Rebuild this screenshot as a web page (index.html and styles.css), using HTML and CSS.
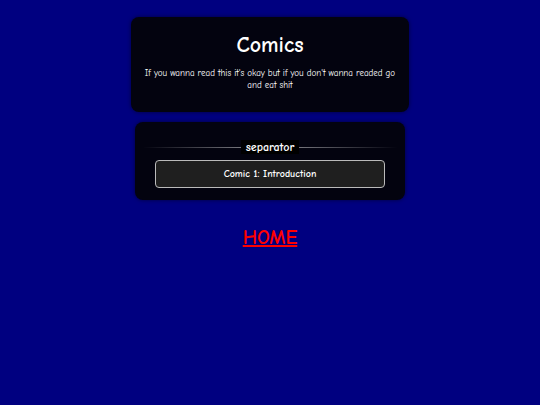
FILE: index.html
```html
<!DOCTYPE html>
<html lang="en">
<head>
    <meta charset="UTF-8">
    <meta name="viewport" content="width=device-width, initial-scale=1.0">
    <title>Comics</title>
    <link rel="stylesheet" href="styles.css">
</head>
<body>
    <div class="header-box">
        <h1>Comics</h1>
        <p>If you wanna read this it's okay but if you don't wanna readed go and eat shit</p>
    </div>
    <div class="list-box">
        <div class="separator"><span>separator</span></div>
        <a class="comic-btn" href="#">Comic 1: Introduction</a>
    </div>
    <a class="home-link" href="#">HOME</a>
</body>
</html>
```

FILE: styles.css
```css
* {
    box-sizing: border-box;
    margin: 0;
    padding: 0;
}
body {
    font-family: 'Comic Sans MS', 'Comic Neue', cursive;
    background: #000080;
    color: #fff;
    min-height: 100vh;
    display: flex;
    flex-direction: column;
    align-items: center;
    padding-top: 17px;
}
.header-box {
    width: 278px;
    height: 95px;
    background: #03030f;
    border-radius: 8px;
    box-shadow: 0 0 4px rgba(0, 0, 0, 0.5);
    text-align: center;
    padding: 16px 12px 0 12px;
}
h1 {
    font-size: 22px;
    font-weight: 900;
    line-height: 24px;
    margin-bottom: 10px;
}
p {
    font-size: 9px;
    line-height: 12px;
}
.list-box {
    width: 270px;
    margin-top: 10px;
    background: #03030f;
    border-radius: 8px;
    box-shadow: 0 0 4px rgba(0, 0, 0, 0.5);
    padding: 18px 20px 12px 20px;
}
.separator {
    display: flex;
    align-items: center;
    margin: 0 -12px 6px -12px;
}
.separator::before, .separator::after {
    content: '';
    flex: 1;
    height: 1px;
}
.separator::before {
    background: linear-gradient(90deg, rgba(255,255,255,0), rgba(255,255,255,0.45));
}
.separator::after {
    background: linear-gradient(90deg, rgba(255,255,255,0.45), rgba(255,255,255,0));
}
.separator span {
    font-size: 12px;
    font-weight: bold;
    background: #000;
    padding: 0 5px;
    line-height: 14px;
}
.comic-btn {
    display: block;
    background: #1f1f1f;
    border: 1px solid #bbb;
    border-radius: 4px;
    color: #fff;
    text-decoration: none;
    text-align: center;
    font-size: 10px;
    font-weight: bold;
    line-height: 26px;
}
.home-link {
    margin-top: 26px;
    color: #ff0000;
    font-size: 20px;
    font-weight: bold;
    text-decoration: underline;
}
```
